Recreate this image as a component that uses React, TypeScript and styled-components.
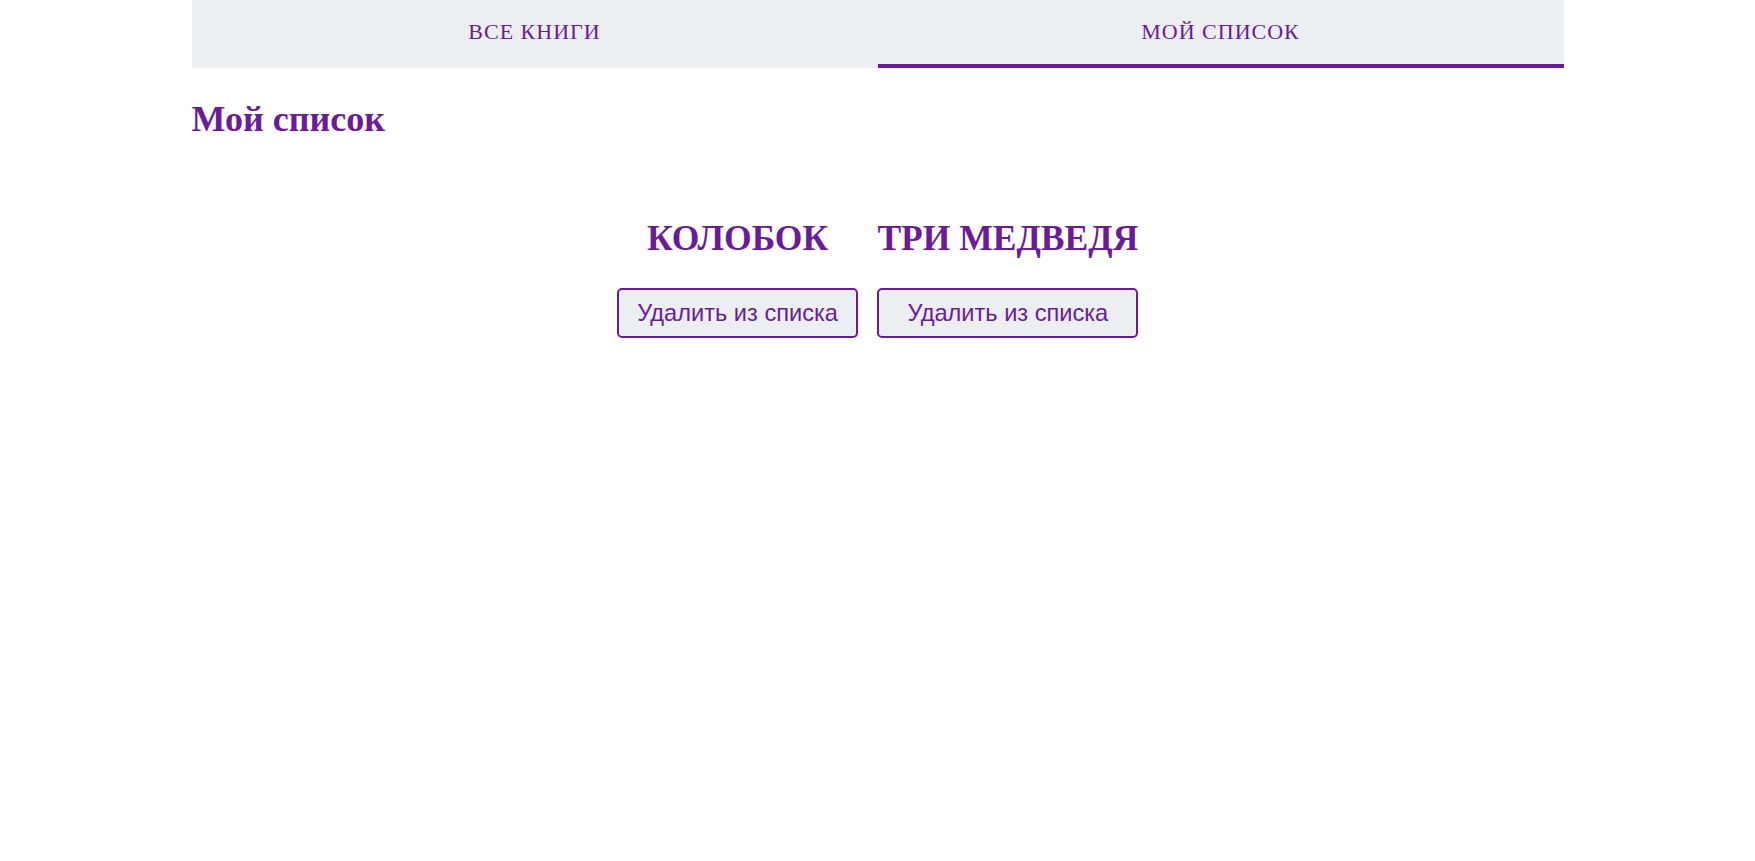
import React from "react";
import styled, { createGlobalStyle } from "styled-components";

const GlobalStyle = createGlobalStyle`
  html, body {
    margin: 0;
    padding: 0;
    background: #ffffff;
    font-family: "Liberation Serif", "Times New Roman", serif;
  }
`;

const Page = styled.div`
  width: 1372px;
  margin: 0 auto;
  color: #6a1b9a;
`;

const TabBar = styled.nav`
  display: grid;
  grid-template-columns: 1fr 1fr;
  background: #eceff1;
`;

const Tab = styled.div<{ $active?: boolean }>`
  height: 64px;
  display: flex;
  align-items: center;
  justify-content: center;
  border-bottom: 4px solid ${(p) => (p.$active ? "#6a1b9a" : "transparent")};
  font-family: "Liberation Serif", "Times New Roman", serif;
  font-size: 22px;
  letter-spacing: 1px;
  color: #6a1b9a;
  text-transform: uppercase;
  cursor: pointer;
`;

const Heading = styled.h1`
  margin: 31px 0 0;
  font-size: 36px;
  font-weight: bold;
  line-height: 40px;
  color: #6a1b9a;
`;

const BookList = styled.div`
  display: flex;
  justify-content: center;
  gap: 19px;
  margin-top: 80px;
`;

const Card = styled.div`
  display: flex;
  flex-direction: column;
  align-items: stretch;
`;

const Title = styled.h2`
  margin: 0;
  font-size: 35.5px;
  font-weight: bold;
  line-height: 38px;
  text-align: center;
  text-transform: uppercase;
  color: #6a1b9a;
  white-space: nowrap;
`;

const RemoveButton = styled.button`
  margin-top: 31px;
  height: 50px;
  padding: 0 18.5px;
  border: 2px solid #6a1b9a;
  border-radius: 5px;
  background: #eceff1;
  color: #6a1b9a;
  font-family: "Liberation Sans", Arial, sans-serif;
  font-size: 23.6px;
  cursor: pointer;
  white-space: nowrap;
`;

const books = ["Колобок", "Три медведя"];

export default function App() {
  return (
    <>
      <GlobalStyle />
      <Page>
        <TabBar>
          <Tab>Все книги</Tab>
          <Tab $active>Мой список</Tab>
        </TabBar>
        <Heading>Мой список</Heading>
        <BookList>
          {books.map((b) => (
            <Card key={b}>
              <Title>{b}</Title>
              <RemoveButton>Удалить из списка</RemoveButton>
            </Card>
          ))}
        </BookList>
      </Page>
    </>
  );
}
